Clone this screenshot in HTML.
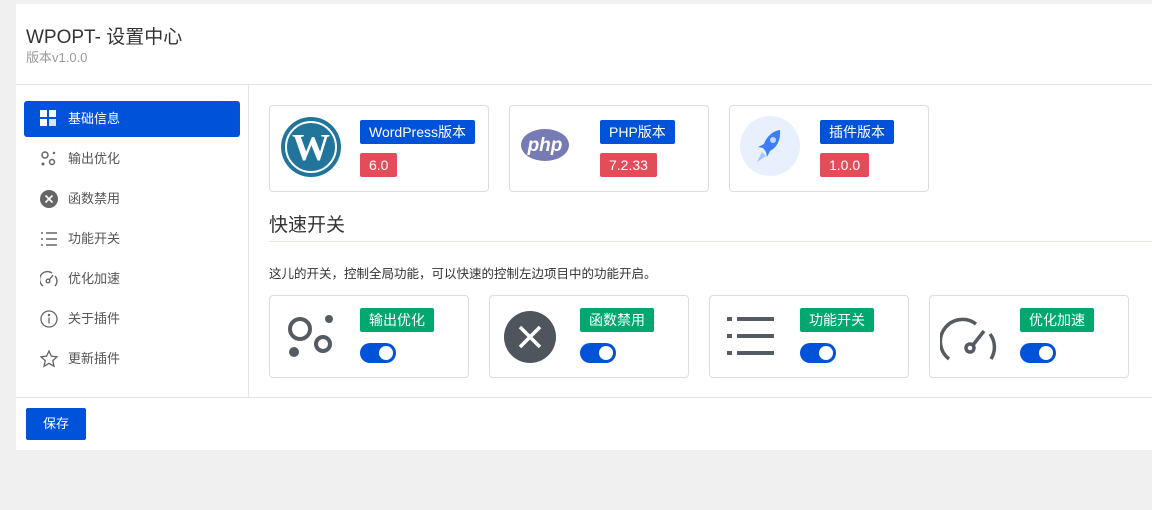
<!DOCTYPE html>
<html><head><meta charset="utf-8"><style>
*{box-sizing:border-box;margin:0;padding:0}
body{width:1152px;height:510px;background:#f0f0f0;font-family:"Liberation Sans","Noto Sans CJK SC",sans-serif;position:relative;overflow:hidden;color:#333}
.panel{position:absolute;left:16px;top:4px;width:1136px;height:446px;background:#fff}
.abs{position:absolute}
.hdr{left:0;top:0;width:1136px;height:81px;border-bottom:1px solid #e5e5e5}
.side{left:0;top:81px;width:233px;height:313px;border-right:1px solid #e5e5e5}
.foot{left:0;top:393px;width:1136px;border-top:1px solid #e5e5e5}
.item{position:absolute;left:8px;width:216px;height:36px;font-size:13px;color:#555;line-height:36px;padding-left:44px;border-radius:3px}
.item.act{background:#0052d9;color:#fff}
.item svg{position:absolute;left:16px;top:9px}
.card{position:absolute;border:1px solid #ddd;border-radius:4px;background:#fff}
.b{position:absolute;color:#fff;font-size:14px;height:24px;line-height:24px;padding:0 9px;border-radius:2px}
.blue{background:#0052d9}.red{background:#e34d59}.green{background:#00a870}
.tg{position:absolute;width:36px;height:20px;border-radius:10px;background:#0052d9}
.tg:after{content:"";position:absolute;right:3px;top:3px;width:14px;height:14px;border-radius:50%;background:#fff}
</style></head><body>
<div class="panel">
<div class="abs hdr">
<div class="abs" style="left:10px;top:18px;font-size:19px;color:#333">WPOPT- 设置中心</div>
<div class="abs" style="left:10px;top:43px;font-size:13px;color:#999">版本v1.0.0</div>
</div>
<div class="abs side">
<div class="item act" style="top:16px"><svg width="16" height="16" viewBox="0 0 16 16" fill="#fff"><rect x="0" y="0" width="7" height="7"/><rect x="9" y="0" width="7" height="7"/><rect x="0" y="9" width="7" height="7"/><rect x="9" y="9" width="7" height="7" opacity=".85"/></svg>基础信息</div>
<div class="item" style="top:56px"><svg width="18" height="18" viewBox="0 0 18 18" fill="none" stroke="#666" stroke-width="1.5"><circle cx="5" cy="5" r="3"/><circle cx="12" cy="12" r="2.5"/><circle cx="14" cy="3" r="1.2" fill="#666" stroke="none"/><circle cx="3" cy="14" r="1.5" fill="#666" stroke="none"/></svg>输出优化</div>
<div class="item" style="top:96px"><svg width="18" height="18" viewBox="0 0 18 18"><circle cx="9" cy="9" r="9" fill="#666"/><path d="M5.5 5.5l7 7M12.5 5.5l-7 7" stroke="#fff" stroke-width="1.6"/></svg>函数禁用</div>
<div class="item" style="top:136px"><svg width="18" height="18" viewBox="0 0 18 18" stroke="#666" stroke-width="1.4"><path d="M1 3h2M6 3h11M1 9h2M6 9h11M1 15h2M6 15h11"/></svg>功能开关</div>
<div class="item" style="top:176px"><svg width="18" height="18" viewBox="0 0 18 18" fill="none" stroke="#666" stroke-width="1.4"><path d="M3 16A7.5 7.5 0 0 1 12 3M15 6a7.5 7.5 0 0 1 0 10"/><circle cx="8" cy="11" r="1.8"/><path d="M9.3 9.7L13 5"/></svg>优化加速</div>
<div class="item" style="top:216px"><svg width="18" height="18" viewBox="0 0 18 18" fill="none" stroke="#666" stroke-width="1.3"><circle cx="9" cy="9" r="8"/><path d="M9 7.5v6"/><circle cx="9" cy="5" r=".6" fill="#666"/></svg>关于插件</div>
<div class="item" style="top:256px"><svg width="18" height="18" viewBox="0 0 18 18" fill="none" stroke="#666" stroke-width="1.3"><path d="M9 1l2.4 5.2 5.6.6-4.2 3.8 1.2 5.6L9 13.4l-5 2.8 1.2-5.6L1 6.8l5.6-.6z"/></svg>更新插件</div>
</div>
<div class="abs foot"><div class="abs" style="left:10px;top:10px;width:60px;height:32px;background:#0052d9;color:#fff;font-size:13px;line-height:32px;text-align:center;border-radius:2px">保存</div></div>
</div>

<div class="card" style="left:269px;top:105px;width:220px;height:87px">
<svg class="abs" style="left:10px;top:10px" width="62" height="62" viewBox="0 0 62 62"><circle cx="31" cy="31" r="30" fill="#21759b"/><circle cx="31" cy="31" r="25" fill="none" stroke="#fff" stroke-width="2"/><text x="31" y="44" font-family="Liberation Serif" font-size="38" font-weight="bold" fill="#fff" text-anchor="middle">W</text></svg>
<div class="b blue" style="left:90px;top:14px">WordPress版本</div>
<div class="b red" style="left:90px;top:47px">6.0</div>
</div>
<div class="card" style="left:509px;top:105px;width:200px;height:87px">
<svg class="abs" style="left:10px;top:22px" width="50" height="34" viewBox="0 0 50 34"><ellipse cx="25" cy="17" rx="24" ry="16" fill="#777bb3"/><text x="25" y="23" font-family="Liberation Sans" font-style="italic" font-weight="bold" font-size="19" fill="#fff" text-anchor="middle">php</text></svg>
<div class="b blue" style="left:90px;top:14px">PHP版本</div>
<div class="b red" style="left:90px;top:47px">7.2.33</div>
</div>
<div class="card" style="left:729px;top:105px;width:200px;height:87px">
<svg class="abs" style="left:10px;top:10px" width="60" height="60" viewBox="0 0 60 60"><circle cx="30" cy="30" r="30" fill="#e8f0fe"/><path d="M40 14c-8 1-14 8-16 14l-6 3 5 1 3 4 1 5 3-6c6-3 11-10 10-21z" fill="#3b7ef6"/><path d="M22 36l-5 10 9-6z" fill="#a8c5fb"/><circle cx="33" cy="24" r="3" fill="#fff" opacity=".7"/></svg>
<div class="b blue" style="left:90px;top:14px">插件版本</div>
<div class="b red" style="left:90px;top:47px">1.0.0</div>
</div>

<div class="abs" style="left:269px;top:210px;font-size:19px;color:#333">快速开关</div>
<div class="abs" style="left:269px;top:241px;width:883px;border-top:1px solid #e8e8e0"></div>
<div class="abs" style="left:269px;top:263px;font-size:12.5px;color:#333">这儿的开关，控制全局功能，可以快速的控制左边项目中的功能开启。</div>

<div class="card" style="left:269px;top:295px;width:200px;height:83px">
<svg class="abs" style="left:15px;top:18px" width="50" height="46" viewBox="0 0 50 46" fill="none" stroke="#555b63" stroke-width="4"><circle cx="15" cy="15" r="10"/><circle cx="38" cy="30" r="7"/><circle cx="44" cy="5" r="4" fill="#555b63" stroke="none"/><circle cx="9" cy="38" r="5" fill="#555b63" stroke="none"/></svg>
<div class="b green" style="left:90px;top:12px">输出优化</div><div class="tg" style="left:90px;top:47px"></div>
</div>
<div class="card" style="left:489px;top:295px;width:200px;height:83px">
<svg class="abs" style="left:14px;top:14px" width="52" height="54" viewBox="0 0 52 54"><ellipse cx="26" cy="27" rx="26" ry="26" fill="#4f555c"/><path d="M16 17l20 20M36 17L16 37" stroke="#fff" stroke-width="3.5"/></svg>
<div class="b green" style="left:90px;top:12px">函数禁用</div><div class="tg" style="left:90px;top:47px"></div>
</div>
<div class="card" style="left:709px;top:295px;width:200px;height:83px">
<svg class="abs" style="left:16px;top:20px" width="50" height="42" viewBox="0 0 50 42" stroke="#555b63" stroke-width="4"><path d="M1 3h5M11 3h37M1 20h5M11 20h37M1 37h5M11 37h37"/></svg>
<div class="b green" style="left:90px;top:12px">功能开关</div><div class="tg" style="left:90px;top:47px"></div>
</div>
<div class="card" style="left:929px;top:295px;width:200px;height:83px">
<svg class="abs" style="left:10px;top:18px" width="62" height="50" viewBox="0 0 62 50" fill="none" stroke="#555b63" stroke-width="3.5"><path d="M9 45A22 22 0 0 1 36 10"/><path d="M50 20A22 22 0 0 1 51 45"/><circle cx="30" cy="34" r="4"/><path d="M33 31L44 17"/></svg>
<div class="b green" style="left:90px;top:12px">优化加速</div><div class="tg" style="left:90px;top:47px"></div>
</div>
</body></html>
